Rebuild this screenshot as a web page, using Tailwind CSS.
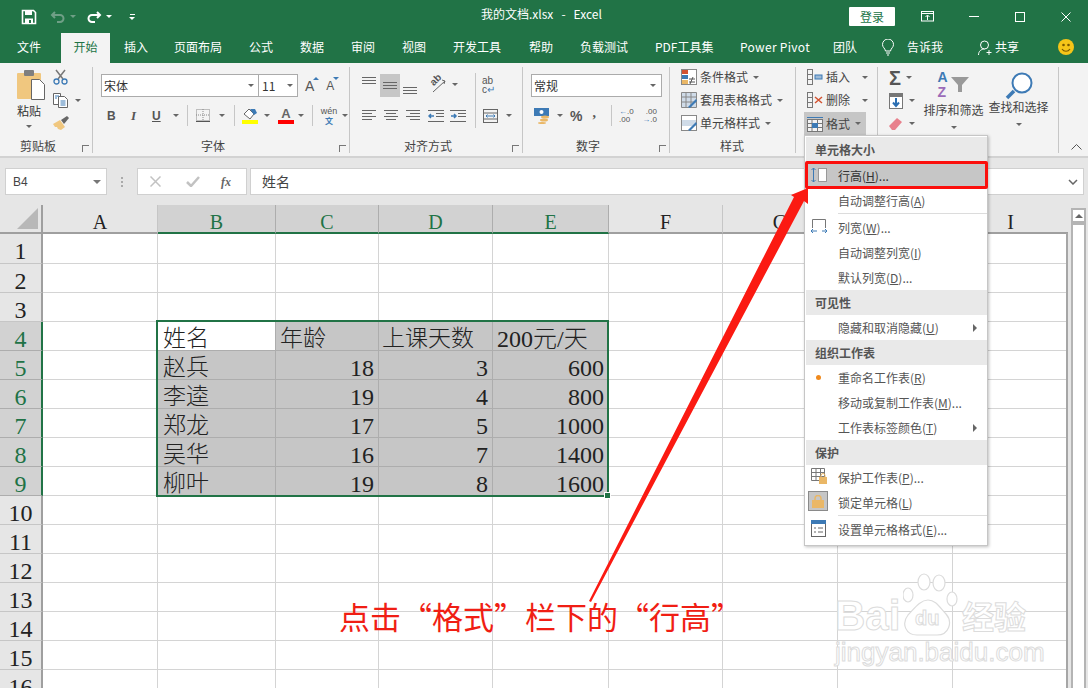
<!DOCTYPE html>
<html lang="zh-CN">
<head>
<meta charset="UTF-8">
<title>我的文档.xlsx - Excel</title>
<script src="https://cdn.jsdelivr.net/npm/@tailwindcss/browser@4"></script>
</head>
<body class="w-[1088px] h-[688px] overflow-hidden relative bg-white font-['Noto_Sans_CJK_SC','Noto_Sans',sans-serif] text-[12px] text-[#444]">

<!-- title bar -->
<div class="h-[33px] bg-[#217346] text-white flex items-center relative">
  <div class="flex items-center w-[150px] pl-[21px] gap-[6px]">
    <svg width="16" height="16" viewBox="0 0 16 16"><path d="M1.5 1.5h11l2 2v11h-13z" fill="none" stroke="#fff" stroke-width="1.6"/><rect x="4" y="2" width="7" height="4" fill="#fff"/><rect x="4" y="9.500" width="8" height="5" fill="#fff"/><rect x="8" y="11" width="2" height="3" fill="#217346"/></svg>
    <svg class="ml-[7px]" width="16" height="14" viewBox="0 0 16 14" fill="none" stroke="#6f9f86" stroke-width="2"><path d="M5 2L2 5l3 3M2 5h8a3.500 3.500 0 0 1 0 7H7"/></svg>
    <span class="w-0 h-0 border-x-[3px] border-x-transparent border-t-[3px] border-t-[#6f9f86] -ml-[2px]"></span>
    <svg class="ml-[4px]" width="16" height="14" viewBox="0 0 16 14" fill="none" stroke="#fff" stroke-width="2"><path d="M11 2l3 3-3 3M14 5H6a3.500 3.500 0 0 0 0 7h3"/></svg>
    <span class="w-0 h-0 border-x-[3px] border-x-transparent border-t-[3px] border-t-white -ml-[2px]"></span>
    <span class="ml-[11px] flex flex-col items-center gap-[2px]"><span class="w-[5px] h-px bg-white"></span><span class="w-0 h-0 border-x-[3px] border-x-transparent border-t-[3px] border-t-white"></span></span>
  </div>
  <div class="absolute left-[481px] top-[5px] text-[12px] leading-[18px] whitespace-pre">我的文档.xlsx   -   Excel</div>
  <div class="ml-auto flex items-center">
    <div class="w-[46px] h-[19px] bg-white text-[#217346] text-[12px] leading-[19px] text-center rounded-[1px] mr-[26px]">登录</div>
    <svg width="13" height="11" viewBox="0 0 13 11" fill="none" stroke="#fff"><rect x=".5" y=".5" width="12" height="9.500"/><path d="M.5 2.500h12M6.500 9V4.500M4.500 6l2-2 2 2"/></svg>
    <span class="w-[10px] h-px bg-white ml-[35px]"></span>
    <span class="w-[10px] h-[10px] border border-white ml-[36px]"></span>
    <svg class="ml-[36px] mr-[17px]" width="10" height="10" viewBox="0 0 10 10" stroke="#fff"><path d="M.5.500l9 9M9.500.500l-9 9"/></svg>
  </div>
</div>

<!-- tabs -->
<div class="h-[30px] bg-[#217346] text-white flex items-stretch text-[12px] leading-[27px] relative">
  <div class="w-[61px] pl-[17px]">文件</div>
  <div class="w-[49px] bg-[#f3f3f3] text-[#217346] text-center">开始</div>
  <div class="w-[64px] pl-[14px]">插入</div>
  <div class="w-[75px] whitespace-nowrap">页面布局</div>
  <div class="w-[51px]">公式</div>
  <div class="w-[51px]">数据</div>
  <div class="w-[51px]">审阅</div>
  <div class="w-[51px]">视图</div>
  <div class="w-[76px] whitespace-nowrap">开发工具</div>
  <div class="w-[51px]">帮助</div>
  <div class="w-[75px] whitespace-nowrap">负载测试</div>
  <div class="w-[85px] whitespace-nowrap">PDF工具集</div>
  <div class="w-[93px] whitespace-nowrap tracking-[.3px]">Power Pivot</div>
  <div class="w-[48px]">团队</div>
  <div class="w-[26px] pt-[6px]"><svg width="14" height="17" viewBox="0 0 14 17" fill="none" stroke="#fff"><path d="M4.500 12C4 9 1.500 8.500 1.500 5.500a5.500 5.500 0 0 1 11 0C12.500 8.500 10 9 9.500 12zM5 14h4M6 16h2"/></svg></div>
  <div class="w-[71px]">告诉我</div>
  <div class="w-[17px] pt-[7px]"><svg width="15" height="16" viewBox="0 0 15 16" fill="none" stroke="#fff"><circle cx="6.500" cy="5" r="4"/><path d="M.5 15c0-4 3-6 6-6M11 10v5M8.500 12.500h5"/></svg></div>
  <div class="w-[63px]">共享</div>
  <div class="pt-[6px]"><svg width="16" height="16" viewBox="0 0 16 16"><circle cx="8" cy="8" r="8" fill="#f5c518"/><circle cx="5.500" cy="6" r="1.300" fill="#7a5a00"/><circle cx="10.500" cy="6" r="1.300" fill="#7a5a00"/><path d="M4 10c2 3 6 3 8 0" fill="none" stroke="#7a5a00" stroke-width="1.200"/></svg></div>
</div>

<!-- ribbon -->
<div class="h-[95px] bg-[#f3f3f3] border-b-2 border-[#d2d2d2] flex relative pt-[4px] text-[#444]">
  <!-- clipboard -->
  <div class="w-[93px] border-r border-[#c6c6c6] h-[86px] relative flex shrink-0">
    <div class="w-[50px] pl-[17px] pt-[3px] flex flex-col items-start">
      <svg width="28" height="30" viewBox="0 0 28 30"><rect x="0" y="3" width="24" height="26" rx="1" fill="#f0c77f"/><rect x="7" y="0" width="10" height="6" rx="1" fill="#7f7f7f"/><path d="M14.500 9.500h8l5 5v15h-13z" fill="#fff" stroke="#666"/></svg>
      <span class="text-[12px] leading-[16px] mt-[3px] text-[#333]">粘贴</span>
      <span class="ml-[9px] mt-[6px] w-0 h-0 border-x-[3px] border-x-transparent border-t-[3px] border-t-[#666]"></span>
    </div>
    <div class="flex flex-col pt-[2px] gap-[8px] pl-[3px]">
      <svg width="15" height="16" viewBox="0 0 15 16" fill="none"><path d="M3 1l7 9M12 1L5 10" stroke="#777" stroke-width="1.500"/><circle cx="3.500" cy="12.500" r="2.500" stroke="#3d7ab5" stroke-width="1.300"/><circle cx="11.500" cy="12.500" r="2.500" stroke="#3d7ab5" stroke-width="1.300"/></svg>
      <div class="flex items-center gap-[6px]"><svg width="16" height="15" viewBox="0 0 16 15" fill="#fff" stroke="#666"><path d="M.5.500h7v11h-7z"/><path d="M5.500 3.500h6l3 3v8h-9z"/><path d="M2 3h4M2 5h2M7.500 8h5M7.500 10h5M7.500 12h5" stroke="#3d7ab5"/></svg><span class="w-0 h-0 border-x-[3px] border-x-transparent border-t-[3px] border-t-[#666]"></span></div>
      <svg width="16" height="15" viewBox="0 0 16 15"><path d="M0 8l7-4 5 7-4 3-3-1-1-2-2 0z" fill="#f0c77f"/><path d="M8 4l6-4 2 2-5 6z" fill="#666"/></svg>
    </div>
    <span class="absolute left-[20px] bottom-[-1px] text-[12px] leading-[16px]">剪贴板</span>
    <span class="absolute right-[3px] bottom-[1px] w-[7px] h-[7px] border-l border-t border-[#777]"></span>
  </div>
  <!-- font -->
  <div class="w-[257px] border-r border-[#c6c6c6] h-[86px] relative shrink-0 pl-[8px] pt-[7px]">
    <div class="flex items-center">
      <div class="w-[158px] h-[23px] bg-white border border-[#ababab] flex items-center justify-between px-[2px] text-[#333] leading-[20px]"><span>宋体</span><span class="mr-[2px] w-0 h-0 border-x-[3px] border-x-transparent border-t-[3px] border-t-[#666]"></span></div>
      <div class="w-[40px] h-[23px] -ml-px bg-white border border-[#ababab] flex items-center justify-between px-[3px] text-[#333]"><span>11</span><span class="mr-[1px] w-0 h-0 border-x-[3px] border-x-transparent border-t-[3px] border-t-[#666]"></span></div>
      <span class="relative ml-[7px] text-[14px] leading-[18px] text-[#555] font-['Liberation_Sans']">A<span class="absolute -right-[5px] top-[0px] w-0 h-0 border-x-[3px] border-x-transparent border-b-[3px] border-b-[#3d7ab5]"></span></span>
      <span class="relative ml-[12px] text-[12px] leading-[18px] text-[#555] font-['Liberation_Sans']">A<span class="absolute -right-[5px] top-[0px] w-0 h-0 border-x-[3px] border-x-transparent border-t-[3px] border-t-[#3d7ab5]"></span></span>
    </div>
    <div class="flex items-center mt-[8px] h-[21px] text-[#555]">
      <b class="ml-[6px] w-[24px] font-['Liberation_Sans'] text-[12px]">B</b>
      <i class="w-[21px] font-['Liberation_Serif'] text-[13px] font-bold">I</i>
      <u class="w-[20px] font-['Liberation_Sans'] font-bold text-[12px]">U</u>
      <span class="w-0 h-0 border-x-[3px] border-x-transparent border-t-[3px] border-t-[#666] ml-[1px]"></span>
      <span class="w-px h-[21px] bg-[#c6c6c6] ml-[8px]"></span>
      <svg class="ml-[8px]" width="14" height="13" viewBox="0 0 14 13" fill="none" stroke="#888" stroke-dasharray="1 1"><rect x=".5" y=".5" width="13" height="11"/><path d="M7 0v12M0 6h14"/><path d="M0 12.500h14" stroke-dasharray="none" stroke="#555"/></svg>
      <span class="w-0 h-0 border-x-[3px] border-x-transparent border-t-[3px] border-t-[#666] ml-[9px]"></span>
      <span class="w-px h-[21px] bg-[#c6c6c6] ml-[9px]"></span>
      <span class="ml-[7px] flex flex-col items-center w-[16px]"><svg width="15" height="12" viewBox="0 0 15 12"><path d="M1 6l5-5 5 5-4 5z" fill="#fff" stroke="#666"/><path d="M7 1h5l2 4-3 2z" fill="#3d7ab5"/></svg><span class="w-[16px] h-[4px] bg-[#ffff00]"></span></span>
      <span class="w-0 h-0 border-x-[3px] border-x-transparent border-t-[3px] border-t-[#666] ml-[6px]"></span>
      <span class="ml-[8px] flex flex-col items-center w-[16px] font-['Liberation_Sans'] font-bold text-[13px] leading-[12px] text-[#666]">A<span class="w-[16px] h-[4px] bg-[#ff0000]"></span></span>
      <span class="w-0 h-0 border-x-[3px] border-x-transparent border-t-[3px] border-t-[#666] ml-[4px]"></span>
      <span class="w-px h-[21px] bg-[#c6c6c6] ml-[8px]"></span>
      <span class="ml-[8px] w-[16px] flex flex-col items-center leading-[9px] text-[8px]"><span class="font-['Liberation_Sans'] text-[9px] text-[#555]">wén</span><span class="text-[#3d7ab5] font-bold">文</span></span>
      <span class="w-0 h-0 border-x-[3px] border-x-transparent border-t-[3px] border-t-[#666] ml-[5px]"></span>
    </div>
    <span class="absolute left-[108px] bottom-[-1px] leading-[16px]">字体</span>
    <span class="absolute right-[3px] bottom-[1px] w-[7px] h-[7px] border-l border-t border-[#777]"></span>
  </div>
  <!-- alignment -->
  <div class="w-[173px] border-r border-[#c6c6c6] h-[86px] relative shrink-0 pl-[12px] pt-[7px]">
    <span class="absolute left-[125px] top-[6px] w-px h-[55px] bg-[#c6c6c6]"></span>
    <div class="flex items-center h-[23px] gap-[7px]">
      <svg class="-mt-[8px]" width="14" height="9" viewBox="0 0 14 9" stroke="#666"><path d="M0 .5h14M0 3.500h14M0 6.500h14"/></svg>
      <span class="w-[20px] h-[23px] -ml-[3px] bg-[#c6c6c6] flex items-center justify-center"><svg width="14" height="9" viewBox="0 0 14 9" stroke="#666"><path d="M0 1.500h14M0 4.500h14M0 7.500h14"/></svg></span>
      <svg width="14" height="9" class="mt-[7px] -ml-[4px]" viewBox="0 0 14 9" stroke="#666"><path d="M0 2.500h14M0 5.500h14M0 8.500h14"/></svg>
      <span class="relative ml-[5px] w-[18px] h-[18px] -mt-[4px]"><span class="absolute left-[1px] top-[0px] -rotate-45 text-[10px] leading-[10px] font-bold font-['Liberation_Sans'] text-[#555]">ab</span><svg class="absolute left-0 top-0" width="18" height="18" viewBox="0 0 18 18" fill="none" stroke="#666"><path d="M4 17L16 6M13 5l3 1-1 3"/></svg></span>
      <span class="w-0 h-0 border-x-[3px] border-x-transparent border-t-[3px] border-t-[#666] -ml-[2px] -mt-[2px]"></span>
      <span class="ml-[17px] text-[10px] leading-[9px] font-['Liberation_Sans'] text-[#555] -mt-[2px]">ab<br>c<span class="text-[#3d7ab5]">↵</span></span>
    </div>
    <div class="flex items-center h-[21px] mt-[8px] gap-[8px]">
      <svg width="14" height="11" viewBox="0 0 14 11" stroke="#666"><path d="M0 .5h14M0 3.500h10M0 6.500h14M0 9.500h10"/></svg>
      <svg width="14" height="11" viewBox="0 0 14 11" stroke="#666"><path d="M0 .5h14M2 3.500h10M0 6.500h14M2 9.500h10"/></svg>
      <svg width="14" height="11" viewBox="0 0 14 11" stroke="#666"><path d="M0 .5h14M4 3.500h10M0 6.500h14M4 9.500h10"/></svg>
      <svg width="16" height="12" viewBox="0 0 16 12" fill="none" stroke="#666"><path d="M0 .5h16M8 3.500h8M8 6.500h8M0 11.500h16"/><path d="M6 6H1M3 4L1 6l2 2" stroke="#3d7ab5" stroke-width="1.500"/></svg>
      <svg width="16" height="12" class="-ml-[2px]" viewBox="0 0 16 12" fill="none" stroke="#666"><path d="M0 .5h16M8 3.500h8M8 6.500h8M0 11.500h16"/><path d="M1 6h5M4 4l2 2-2 2" stroke="#3d7ab5" stroke-width="1.500"/></svg>
      <svg class="ml-[9px]" width="15" height="14" viewBox="0 0 15 14" fill="none" stroke="#666"><rect x=".5" y=".5" width="14" height="13"/><path d="M0 4h15M0 10h15"/><path d="M3 7h9M4.500 5.500L3 7l1.500 1.500M10.500 5.500L12 7l-1.500 1.500" stroke="#3d7ab5"/></svg>
      <span class="w-0 h-0 border-x-[3px] border-x-transparent border-t-[3px] border-t-[#666]"></span>
    </div>
    <span class="absolute left-[54px] bottom-[-1px] leading-[16px]">对齐方式</span>
    <span class="absolute right-[3px] bottom-[1px] w-[7px] h-[7px] border-l border-t border-[#777]"></span>
  </div>
  <!-- number -->
  <div class="w-[147px] border-r border-[#c6c6c6] h-[86px] relative shrink-0 pl-[8px] pt-[7px]">
    <div class="w-[131px] h-[23px] bg-white border border-[#ababab] flex items-center justify-between px-[2px] text-[#333]"><span>常规</span><span class="mr-[3px] w-0 h-0 border-x-[3px] border-x-transparent border-t-[3px] border-t-[#666]"></span></div>
    <div class="flex items-center mt-[8px] h-[21px] pl-[3px]">
      <svg width="17" height="16" viewBox="0 0 17 16"><rect x="0" y="0" width="15" height="8" fill="#3d7ab5"/><circle cx="7.500" cy="4" r="2" fill="#fff"/><ellipse cx="11" cy="9" rx="4" ry="1.500" fill="#eab766"/><ellipse cx="10" cy="12" rx="4" ry="1.500" fill="#eab766"/><ellipse cx="8" cy="15" rx="4" ry="1" fill="#eab766"/></svg>
      <span class="ml-[6px] w-0 h-0 border-x-[3px] border-x-transparent border-t-[3px] border-t-[#666]"></span>
      <span class="ml-[7px] font-['Liberation_Sans'] font-bold text-[14px] text-[#555] leading-none">%</span>
      <span class="ml-[10px] font-['Liberation_Serif'] font-bold text-[14px] text-[#555] leading-none -mt-[5px]">,</span>
      <span class="w-px h-[21px] bg-[#c6c6c6] ml-[15px]"></span>
      <span class="ml-[7px] w-[16px] text-[8px] leading-[8px] font-['Liberation_Sans'] text-[#555]"><span class="text-[#3d7ab5]">←</span>.0<br>.00</span>
      <span class="ml-[6px] w-[16px] text-[8px] leading-[8px] font-['Liberation_Sans'] text-[#555] text-right">.00<br><span class="text-[#3d7ab5]">→</span>.0</span>
    </div>
    <span class="absolute left-[53px] bottom-[-1px] leading-[16px]">数字</span>
    <span class="absolute right-[3px] bottom-[1px] w-[7px] h-[7px] border-l border-t border-[#777]"></span>
  </div>
  <!-- styles -->
  <div class="w-[126px] border-r border-[#c6c6c6] h-[86px] relative shrink-0 pl-[11px] pt-[1px] flex flex-col gap-[5px]">
    <div class="flex items-center h-[18px] gap-[3px]"><svg width="16" height="16" viewBox="0 0 16 16"><rect x=".5" y=".5" width="15" height="15" fill="#fff" stroke="#888"/><rect x="1" y="1" width="6" height="4" fill="#d35230"/><rect x="1" y="6" width="6" height="4" fill="#3d7ab5"/><rect x="1" y="11" width="6" height="4" fill="#eab766"/><path d="M8 10h6M8 13h6M12 8l-3 7" stroke="#555"/></svg><span>条件格式</span><span class="ml-[2px] w-0 h-0 border-x-[3px] border-x-transparent border-t-[3px] border-t-[#666]"></span></div>
    <div class="flex items-center h-[18px] gap-[3px]"><svg width="16" height="16" viewBox="0 0 16 16"><path d="M.5.500h15v15H.5z" fill="#cfdbe8" stroke="#888"/><path d="M0 5h16M0 10h16M5 0v16M10 0v16" stroke="#888"/><path d="M7 15l8-8 1 2-7 7z" fill="#3d7ab5"/></svg><span class="whitespace-nowrap">套用表格格式</span><span class="ml-[2px] w-0 h-0 border-x-[3px] border-x-transparent border-t-[3px] border-t-[#666]"></span></div>
    <div class="flex items-center h-[18px] gap-[3px]"><svg width="16" height="16" viewBox="0 0 16 16"><rect x=".5" y=".5" width="15" height="15" fill="#fff" stroke="#888"/><rect x="1" y="5" width="14" height="6" fill="#cfdbe8"/><path d="M7 15l8-8 1 2-7 7z" fill="#3d7ab5"/></svg><span class="whitespace-nowrap">单元格样式</span><span class="ml-[2px] w-0 h-0 border-x-[3px] border-x-transparent border-t-[3px] border-t-[#666]"></span></div>
    <span class="absolute left-[50px] bottom-[-1px] leading-[16px]">样式</span>
  </div>
  <!-- cells -->
  <div class="w-[82px] border-r border-[#c6c6c6] h-[86px] relative shrink-0 pl-[11px] pt-[1px] flex flex-col gap-[5px]">
    <div class="flex items-center h-[18px] gap-[3px]"><svg width="16" height="16" viewBox="0 0 16 16" fill="none" stroke="#777"><rect x=".5" y=".5" width="5" height="15"/><path d="M0 5.500h6M0 10.500h6"/><rect x="8" y="6" width="7" height="4" fill="#9cb9d6" stroke="#3d7ab5"/></svg><span>插入</span><span class="ml-[9px] w-0 h-0 border-x-[3px] border-x-transparent border-t-[3px] border-t-[#666]"></span></div>
    <div class="flex items-center h-[18px] gap-[3px]"><svg width="16" height="16" viewBox="0 0 16 16" fill="none" stroke="#777"><rect x=".5" y=".5" width="5" height="15"/><path d="M0 5.500h6M0 10.500h6"/><path d="M8 5l7 6M15 5l-7 6" stroke="#d35230" stroke-width="1.500"/></svg><span>删除</span><span class="ml-[9px] w-0 h-0 border-x-[3px] border-x-transparent border-t-[3px] border-t-[#666]"></span></div>
    <div class="flex items-center h-[23px] w-[62px] -ml-[3px] bg-[#c6c6c6] gap-[3px] -mt-[2px] pl-[3px]"><svg width="16" height="16" viewBox="0 0 16 16" fill="none" stroke="#777"><path d="M0 1.500h16" stroke="#3d7ab5"/><rect x=".5" y="3.500" width="15" height="12" fill="#f3f3f3"/><path d="M0 7.500h16M0 11.500h16M5 3v13M10.500 3v13"/><rect x="5" y="7" width="6" height="5" fill="#3d7ab5" stroke="none"/></svg><span>格式</span><span class="ml-[2px] w-0 h-0 border-x-[3px] border-x-transparent border-t-[3px] border-t-[#666]"></span></div>
  </div>
  <!-- editing -->
  <div class="w-[181px] border-r border-[#c6c6c6] h-[86px] relative shrink-0 flex pl-[11px] pt-[2px]">
    <div class="w-[32px] flex flex-col gap-[6px]">
      <div class="flex items-center h-[17px] gap-[5px]"><span class="font-['Liberation_Sans'] font-bold text-[20px] leading-none text-[#555]">Σ</span><span class="w-0 h-0 border-x-[3px] border-x-transparent border-t-[3px] border-t-[#666]"></span></div>
      <div class="flex items-center h-[17px] gap-[6px]"><svg width="14" height="16" viewBox="0 0 14 16" fill="#fff" stroke="#777"><rect x=".5" y=".5" width="13" height="15"/><path d="M0 2.500h14" stroke-width="3" stroke="#777"/><path d="M7 5v8M4 9.500L7 13l3-3.500" stroke="#2b6fb3" stroke-width="2" fill="none"/></svg><span class="w-0 h-0 border-x-[3px] border-x-transparent border-t-[3px] border-t-[#666]"></span></div>
      <div class="flex items-center h-[17px] gap-[6px]"><svg width="14" height="14" viewBox="0 0 14 14"><path d="M0 9l8-8 5 4-7 8H3z" fill="#e8808c"/></svg><span class="w-0 h-0 border-x-[3px] border-x-transparent border-t-[3px] border-t-[#666]"></span></div>
    </div>
    <div class="w-[65px] flex flex-col items-center">
      <div class="h-[28px] relative w-[32px] mt-[3px]"><span class="absolute left-0 -top-[2px] font-['Liberation_Sans'] font-bold text-[14px] leading-[14px] text-[#3d7ab5]">A</span><span class="absolute left-0 top-[13px] font-['Liberation_Sans'] font-bold text-[14px] leading-[14px] text-[#9b6bb8]">Z</span><svg class="absolute left-[13px] top-[5px]" width="18" height="16" viewBox="0 0 18 16"><path d="M0 0h18l-7 8v7H7V8z" fill="#999"/></svg></div>
      <span class="whitespace-nowrap leading-[16px] mt-[2px]">排序和筛选</span>
      <span class="mt-[8px] w-0 h-0 border-x-[3px] border-x-transparent border-t-[3px] border-t-[#666]"></span>
    </div>
    <div class="w-[65px] flex flex-col items-center">
      <svg class="mt-[3px]" width="28" height="28" viewBox="0 0 28 28" fill="none" stroke="#3d7ab5"><circle cx="17" cy="11" r="9.500" stroke-width="2" fill="#fff"/><path d="M9 19l-7 7" stroke-width="3.500"/></svg>
      <span class="whitespace-nowrap leading-[16px] -mt-[1px]">查找和选择</span>
      <span class="mt-[8px] w-0 h-0 border-x-[3px] border-x-transparent border-t-[3px] border-t-[#666]"></span>
    </div>
  </div>
  <svg class="ml-[12px] mt-[77px]" width="11" height="6" viewBox="0 0 11 6" fill="none" stroke="#555"><path d="M.5 5.500l5-5 5 5"/></svg>
</div>

<!-- formula bar -->
<div class="h-[47px] bg-[#e6e6e6] flex pt-[10px] pl-[5px] relative">
  <div class="w-[102px] h-[27px] bg-white border border-[#d0d0d0] flex items-center justify-between pl-[7px] pr-[5px] font-['Liberation_Sans'] text-[#444] text-[12px]">B4<span class="w-0 h-0 border-x-[4px] border-x-transparent border-t-[4px] border-t-[#777]"></span></div>
  <div class="w-[30px] flex justify-center items-center h-[27px]"><span class="flex flex-col gap-[2px]"><span class="w-[2px] h-[2px] bg-[#aaa]"></span><span class="w-[2px] h-[2px] bg-[#aaa]"></span><span class="w-[2px] h-[2px] bg-[#aaa]"></span></span></div>
  <div class="w-[110px] h-[27px] bg-white border border-[#d0d0d0] flex items-center pl-[12px]">
    <svg width="11" height="11" viewBox="0 0 11 11" stroke="#c2c2c2" stroke-width="1.500"><path d="M.5.500l10 10M10.500.500l-10 10"/></svg>
    <svg class="ml-[25px]" width="14" height="11" viewBox="0 0 14 11" fill="none" stroke="#c2c2c2" stroke-width="2.500"><path d="M1 6l4 4 8-9"/></svg>
    <span class="ml-[21px] font-['Liberation_Serif'] italic font-bold text-[12px] text-[#666]">fx</span>
  </div>
  <div class="w-[834px] h-[27px] ml-[3px] bg-white border border-[#d0d0d0] flex items-center pl-[11px] text-[14px] text-[#444] relative">姓名
    <svg class="absolute right-[5px] top-[10px]" width="10" height="6" viewBox="0 0 10 6" fill="none" stroke="#666" stroke-width="1.500"><path d="M1 1l4 4 4-4"/></svg>
  </div>
</div>

<!-- sheet -->
<div class="flex absolute left-0 top-[205px] w-[1088px] h-[483px] overflow-hidden bg-white">
  <div class="w-[1068px] grid grid-cols-[43px_115px_118px_103px_114px_116px_114px_115px_115px_115px] grid-rows-[29px_30px_repeat(15,29px)] shrink-0 font-['Liberation_Serif','Noto_Sans_CJK_SC',serif] text-[24px] text-[#222] leading-[34px]">
    <!-- header row -->
    <div class="bg-[#e6e6e6] border-r-2 border-b-2 border-[#9f9f9f] relative"><span class="absolute right-[3px] bottom-[3px] w-0 h-0 border-l-[21px] border-l-transparent border-b-[21px] border-b-[#b8b8b8]"></span></div>
    <div class="bg-[#e6e6e6] border-r border-b-2 border-r-[#c6c6c6] border-b-[#9f9f9f] text-center text-[20px]">A</div>
    <div class="bg-[#d2d2d2] border-r border-b-2 border-r-[#adadad] border-b-[#217346] text-center text-[20px] text-[#217346]">B</div>
    <div class="bg-[#d2d2d2] border-r border-b-2 border-r-[#adadad] border-b-[#217346] text-center text-[20px] text-[#217346]">C</div>
    <div class="bg-[#d2d2d2] border-r border-b-2 border-r-[#adadad] border-b-[#217346] text-center text-[20px] text-[#217346]">D</div>
    <div class="bg-[#d2d2d2] border-r border-b-2 border-r-[#adadad] border-b-[#217346] text-center text-[20px] text-[#217346]">E</div>
    <div class="bg-[#e6e6e6] border-r border-b-2 border-r-[#c6c6c6] border-b-[#9f9f9f] text-center text-[20px]">F</div>
    <div class="bg-[#e6e6e6] border-r border-b-2 border-r-[#c6c6c6] border-b-[#9f9f9f] text-center text-[20px]">G</div>
    <div class="bg-[#e6e6e6] border-r border-b-2 border-r-[#c6c6c6] border-b-[#9f9f9f] text-center text-[20px]">H</div>
    <div class="bg-[#e6e6e6] border-b-2 border-b-[#9f9f9f] text-center text-[20px]">I</div>

    <!-- row 1 -->
    <div class="bg-[#e6e6e6] border-r-2 border-b border-r-[#9f9f9f] border-b-[#c6c6c6] text-center">1</div>
    <div class="border-r border-b border-[#d4d4d4]"></div><div class="border-r border-b border-[#d4d4d4]"></div><div class="border-r border-b border-[#d4d4d4]"></div><div class="border-r border-b border-[#d4d4d4]"></div><div class="border-r border-b border-[#d4d4d4]"></div><div class="border-r border-b border-[#d4d4d4]"></div><div class="border-r border-b border-[#d4d4d4]"></div><div class="border-r border-b border-[#d4d4d4]"></div><div class="border-b border-[#d4d4d4]"></div>
    <!-- row 2 -->
    <div class="bg-[#e6e6e6] border-r-2 border-b border-r-[#9f9f9f] border-b-[#c6c6c6] text-center">2</div>
    <div class="border-r border-b border-[#d4d4d4]"></div><div class="border-r border-b border-[#d4d4d4]"></div><div class="border-r border-b border-[#d4d4d4]"></div><div class="border-r border-b border-[#d4d4d4]"></div><div class="border-r border-b border-[#d4d4d4]"></div><div class="border-r border-b border-[#d4d4d4]"></div><div class="border-r border-b border-[#d4d4d4]"></div><div class="border-r border-b border-[#d4d4d4]"></div><div class="border-b border-[#d4d4d4]"></div>
    <!-- row 3 -->
    <div class="bg-[#e6e6e6] border-r-2 border-b border-r-[#9f9f9f] border-b-[#c6c6c6] text-center">3</div>
    <div class="border-r border-b border-[#d4d4d4]"></div><div class="border-r border-b border-[#d4d4d4]"></div><div class="border-r border-b border-[#d4d4d4]"></div><div class="border-r border-b border-[#d4d4d4]"></div><div class="border-r border-b border-[#d4d4d4]"></div><div class="border-r border-b border-[#d4d4d4]"></div><div class="border-r border-b border-[#d4d4d4]"></div><div class="border-r border-b border-[#d4d4d4]"></div><div class="border-b border-[#d4d4d4]"></div>
    <!-- row 4 -->
    <div class="bg-[#d2d2d2] border-r-2 border-b border-r-[#217346] border-b-[#adadad] text-center text-[#217346]">4</div>
    <div class="border-r border-b border-[#d4d4d4]"></div>
    <div class="border-b border-r border-[#adadad] bg-white pl-[5px] text-[23px] font-light">姓名</div>
    <div class="border-b border-r border-[#adadad] bg-[#c6c6c6] pl-[4px] text-[23px] font-light">年龄</div>
    <div class="border-b border-r border-[#adadad] bg-[#c6c6c6] pl-[3px] text-[23px] font-light whitespace-nowrap">上课天数</div>
    <div class="border-b border-r border-[#adadad] bg-[#c6c6c6] pl-[4px] text-[24px] font-light whitespace-nowrap">200元/天</div>
    <div class="border-r border-b border-[#d4d4d4]"></div><div class="border-r border-b border-[#d4d4d4]"></div><div class="border-r border-b border-[#d4d4d4]"></div><div class="border-b border-[#d4d4d4]"></div>
    <!-- row 5 -->
    <div class="bg-[#d2d2d2] border-r-2 border-b border-r-[#217346] border-b-[#adadad] text-center text-[#217346]">5</div>
    <div class="border-r border-b border-[#d4d4d4]"></div>
    <div class="border-b border-r border-[#adadad] bg-[#c6c6c6] pl-[5px] text-[23px] font-light">赵兵</div>
    <div class="border-b border-r border-[#adadad] bg-[#c6c6c6] text-right pr-[4px]">18</div>
    <div class="border-b border-r border-[#adadad] bg-[#c6c6c6] text-right pr-[4px]">3</div>
    <div class="border-b border-r border-[#adadad] bg-[#c6c6c6] text-right pr-[4px]">600</div>
    <div class="border-r border-b border-[#d4d4d4]"></div><div class="border-r border-b border-[#d4d4d4]"></div><div class="border-r border-b border-[#d4d4d4]"></div><div class="border-b border-[#d4d4d4]"></div>
    <!-- row 6 -->
    <div class="bg-[#d2d2d2] border-r-2 border-b border-r-[#217346] border-b-[#adadad] text-center text-[#217346]">6</div>
    <div class="border-r border-b border-[#d4d4d4]"></div>
    <div class="border-b border-r border-[#adadad] bg-[#c6c6c6] pl-[5px] text-[23px] font-light">李逵</div>
    <div class="border-b border-r border-[#adadad] bg-[#c6c6c6] text-right pr-[4px]">19</div>
    <div class="border-b border-r border-[#adadad] bg-[#c6c6c6] text-right pr-[4px]">4</div>
    <div class="border-b border-r border-[#adadad] bg-[#c6c6c6] text-right pr-[4px]">800</div>
    <div class="border-r border-b border-[#d4d4d4]"></div><div class="border-r border-b border-[#d4d4d4]"></div><div class="border-r border-b border-[#d4d4d4]"></div><div class="border-b border-[#d4d4d4]"></div>
    <!-- row 7 -->
    <div class="bg-[#d2d2d2] border-r-2 border-b border-r-[#217346] border-b-[#adadad] text-center text-[#217346]">7</div>
    <div class="border-r border-b border-[#d4d4d4]"></div>
    <div class="border-b border-r border-[#adadad] bg-[#c6c6c6] pl-[5px] text-[23px] font-light">郑龙</div>
    <div class="border-b border-r border-[#adadad] bg-[#c6c6c6] text-right pr-[4px]">17</div>
    <div class="border-b border-r border-[#adadad] bg-[#c6c6c6] text-right pr-[4px]">5</div>
    <div class="border-b border-r border-[#adadad] bg-[#c6c6c6] text-right pr-[4px]">1000</div>
    <div class="border-r border-b border-[#d4d4d4]"></div><div class="border-r border-b border-[#d4d4d4]"></div><div class="border-r border-b border-[#d4d4d4]"></div><div class="border-b border-[#d4d4d4]"></div>
    <!-- row 8 -->
    <div class="bg-[#d2d2d2] border-r-2 border-b border-r-[#217346] border-b-[#adadad] text-center text-[#217346]">8</div>
    <div class="border-r border-b border-[#d4d4d4]"></div>
    <div class="border-b border-r border-[#adadad] bg-[#c6c6c6] pl-[5px] text-[23px] font-light">吴华</div>
    <div class="border-b border-r border-[#adadad] bg-[#c6c6c6] text-right pr-[4px]">16</div>
    <div class="border-b border-r border-[#adadad] bg-[#c6c6c6] text-right pr-[4px]">7</div>
    <div class="border-b border-r border-[#adadad] bg-[#c6c6c6] text-right pr-[4px]">1400</div>
    <div class="border-r border-b border-[#d4d4d4]"></div><div class="border-r border-b border-[#d4d4d4]"></div><div class="border-r border-b border-[#d4d4d4]"></div><div class="border-b border-[#d4d4d4]"></div>
    <!-- row 9 -->
    <div class="bg-[#d2d2d2] border-r-2 border-b border-r-[#217346] border-b-[#adadad] text-center text-[#217346]">9</div>
    <div class="border-r border-b border-[#d4d4d4]"></div>
    <div class="border-b border-r border-[#adadad] bg-[#c6c6c6] pl-[5px] text-[23px] font-light">柳叶</div>
    <div class="border-b border-r border-[#adadad] bg-[#c6c6c6] text-right pr-[4px]">19</div>
    <div class="border-b border-r border-[#adadad] bg-[#c6c6c6] text-right pr-[4px]">8</div>
    <div class="border-b border-r border-[#adadad] bg-[#c6c6c6] text-right pr-[4px]">1600</div>
    <div class="border-r border-b border-[#d4d4d4]"></div><div class="border-r border-b border-[#d4d4d4]"></div><div class="border-r border-b border-[#d4d4d4]"></div><div class="border-b border-[#d4d4d4]"></div>
    <!-- row 10 -->
    <div class="bg-[#e6e6e6] border-r-2 border-b border-r-[#9f9f9f] border-b-[#c6c6c6] text-center">10</div>
    <div class="border-r border-b border-[#d4d4d4]"></div><div class="border-r border-b border-[#d4d4d4]"></div><div class="border-r border-b border-[#d4d4d4]"></div><div class="border-r border-b border-[#d4d4d4]"></div><div class="border-r border-b border-[#d4d4d4]"></div><div class="border-r border-b border-[#d4d4d4]"></div><div class="border-r border-b border-[#d4d4d4]"></div><div class="border-r border-b border-[#d4d4d4]"></div><div class="border-b border-[#d4d4d4]"></div>
    <!-- row 11 -->
    <div class="bg-[#e6e6e6] border-r-2 border-b border-r-[#9f9f9f] border-b-[#c6c6c6] text-center">11</div>
    <div class="border-r border-b border-[#d4d4d4]"></div><div class="border-r border-b border-[#d4d4d4]"></div><div class="border-r border-b border-[#d4d4d4]"></div><div class="border-r border-b border-[#d4d4d4]"></div><div class="border-r border-b border-[#d4d4d4]"></div><div class="border-r border-b border-[#d4d4d4]"></div><div class="border-r border-b border-[#d4d4d4]"></div><div class="border-r border-b border-[#d4d4d4]"></div><div class="border-b border-[#d4d4d4]"></div>
    <!-- row 12 -->
    <div class="bg-[#e6e6e6] border-r-2 border-b border-r-[#9f9f9f] border-b-[#c6c6c6] text-center">12</div>
    <div class="border-r border-b border-[#d4d4d4]"></div><div class="border-r border-b border-[#d4d4d4]"></div><div class="border-r border-b border-[#d4d4d4]"></div><div class="border-r border-b border-[#d4d4d4]"></div><div class="border-r border-b border-[#d4d4d4]"></div><div class="border-r border-b border-[#d4d4d4]"></div><div class="border-r border-b border-[#d4d4d4]"></div><div class="border-r border-b border-[#d4d4d4]"></div><div class="border-b border-[#d4d4d4]"></div>
    <!-- row 13 -->
    <div class="bg-[#e6e6e6] border-r-2 border-b border-r-[#9f9f9f] border-b-[#c6c6c6] text-center">13</div>
    <div class="border-r border-b border-[#d4d4d4]"></div><div class="border-r border-b border-[#d4d4d4]"></div><div class="border-r border-b border-[#d4d4d4]"></div><div class="border-r border-b border-[#d4d4d4]"></div><div class="border-r border-b border-[#d4d4d4]"></div><div class="border-r border-b border-[#d4d4d4]"></div><div class="border-r border-b border-[#d4d4d4]"></div><div class="border-r border-b border-[#d4d4d4]"></div><div class="border-b border-[#d4d4d4]"></div>
    <!-- row 14 -->
    <div class="bg-[#e6e6e6] border-r-2 border-b border-r-[#9f9f9f] border-b-[#c6c6c6] text-center">14</div>
    <div class="border-r border-b border-[#d4d4d4]"></div><div class="border-r border-b border-[#d4d4d4]"></div><div class="border-r border-b border-[#d4d4d4]"></div><div class="border-r border-b border-[#d4d4d4]"></div><div class="border-r border-b border-[#d4d4d4]"></div><div class="border-r border-b border-[#d4d4d4]"></div><div class="border-r border-b border-[#d4d4d4]"></div><div class="border-r border-b border-[#d4d4d4]"></div><div class="border-b border-[#d4d4d4]"></div>
    <!-- row 15 -->
    <div class="bg-[#e6e6e6] border-r-2 border-b border-r-[#9f9f9f] border-b-[#c6c6c6] text-center">15</div>
    <div class="border-r border-b border-[#d4d4d4]"></div><div class="border-r border-b border-[#d4d4d4]"></div><div class="border-r border-b border-[#d4d4d4]"></div><div class="border-r border-b border-[#d4d4d4]"></div><div class="border-r border-b border-[#d4d4d4]"></div><div class="border-r border-b border-[#d4d4d4]"></div><div class="border-r border-b border-[#d4d4d4]"></div><div class="border-r border-b border-[#d4d4d4]"></div><div class="border-b border-[#d4d4d4]"></div>
    <!-- row 16 -->
    <div class="bg-[#e6e6e6] border-r-2 border-b border-r-[#9f9f9f] border-b-[#c6c6c6] text-center">16</div>
    <div class="border-r border-b border-[#d4d4d4]"></div><div class="border-r border-b border-[#d4d4d4]"></div><div class="border-r border-b border-[#d4d4d4]"></div><div class="border-r border-b border-[#d4d4d4]"></div><div class="border-r border-b border-[#d4d4d4]"></div><div class="border-r border-b border-[#d4d4d4]"></div><div class="border-r border-b border-[#d4d4d4]"></div><div class="border-r border-b border-[#d4d4d4]"></div><div class="border-b border-[#d4d4d4]"></div>
  </div>
  <!-- scrollbar -->
  <div class="w-[20px] bg-[#e6e6e6] relative">
    <span class="absolute left-[-2px] top-[28px] bottom-0 w-[2px] bg-[#a6a6a6]"></span>
    <div class="absolute left-[3px] top-[3px] w-[15px] h-[15px] bg-white border-2 border-[#b4b4b4] flex items-center justify-center"><span class="w-0 h-0 border-x-[4px] border-x-transparent border-b-[4px] border-b-[#666]"></span></div>
    <div class="absolute left-[3px] top-[18px] w-[15px] h-[470px] bg-white border-2 border-[#b4b4b4]"></div>
  </div>
</div>

<!-- selection border -->
<div class="absolute left-[156px] top-[320px] w-[453px] h-[177px] border-2 border-[#217346] pointer-events-none"></div>
<div class="absolute left-[605px] top-[493px] w-[5px] h-[5px] bg-[#217346] outline outline-white"></div>

<!-- format dropdown -->
<div class="absolute left-[804px] top-[135px] w-[184px] h-[411px] bg-white border border-[#c6c6c6] shadow-[1px_1px_3px_rgba(0,0,0,.25)] pl-px text-[12px] text-[#555] flex flex-col">
  <div class="h-[26px] bg-[#e9e9e9] pl-[9px] leading-[25px] font-bold text-[#555] shrink-0 mt-px">单元格大小</div>
  <div class="h-[25px] bg-[#c6c6c6] flex items-center relative shrink-0 text-[#333]">
    <svg class="absolute left-[4px] top-[3px]" width="18" height="18" viewBox="0 0 18 18"><path d="M3.500 2v14M1.500 4l2-2 2 2M1.500 14l2 2 2-2" fill="none" stroke="#3d7ab5"/><rect x="8.500" y="2.500" width="8" height="13" fill="#fff" stroke="#999"/></svg>
    <span class="ml-[32px]">行高(<u>H</u>)...</span>
  </div>
  <div class="h-[25px] flex items-center pl-[32px] shrink-0">自动调整行高(<u>A</u>)</div>
  <div class="ml-[32px] h-px mb-px bg-[#dcdcdc] shrink-0"></div>
  <div class="h-[25px] flex items-center relative shrink-0">
    <svg class="absolute left-[4px] top-[3px]" width="18" height="17" viewBox="0 0 18 17" fill="none"><path d="M2.500 10V1.500h13V10" stroke="#777"/><path d="M1 13h6M12 13h5M3 11l-2 2 2 2M15 11l2 2-2 2" stroke="#3d7ab5"/></svg>
    <span class="ml-[32px]">列宽(<u>W</u>)...</span>
  </div>
  <div class="h-[25px] flex items-center pl-[32px] shrink-0">自动调整列宽(<u>I</u>)</div>
  <div class="h-[25px] flex items-center pl-[32px] shrink-0">默认列宽(<u>D</u>)...</div>
  <div class="h-[25px] bg-[#e9e9e9] pl-[9px] leading-[25px] font-bold shrink-0">可见性</div>
  <div class="h-[25px] flex items-center pl-[32px] relative shrink-0">隐藏和取消隐藏(<u>U</u>)<span class="absolute right-[10px] top-[9px] w-0 h-0 border-y-[4px] border-y-transparent border-l-[4px] border-l-[#666]"></span></div>
  <div class="h-[25px] bg-[#e9e9e9] pl-[9px] leading-[25px] font-bold shrink-0">组织工作表</div>
  <div class="h-[25px] flex items-center pl-[32px] relative shrink-0"><span class="absolute left-[10px] top-[10px] w-[5px] h-[5px] rounded-full bg-[#f08a1d]"></span>重命名工作表(<u>R</u>)</div>
  <div class="h-[25px] flex items-center pl-[32px] shrink-0 whitespace-nowrap">移动或复制工作表(<u>M</u>)...</div>
  <div class="h-[25px] flex items-center pl-[32px] relative shrink-0">工作表标签颜色(<u>T</u>)<span class="absolute right-[10px] top-[9px] w-0 h-0 border-y-[4px] border-y-transparent border-l-[4px] border-l-[#666]"></span></div>
  <div class="h-[25px] bg-[#e9e9e9] pl-[9px] leading-[25px] font-bold shrink-0">保护</div>
  <div class="h-[25px] flex items-center relative shrink-0">
    <svg class="absolute left-[5px] top-[3px]" width="17" height="17" viewBox="0 0 17 17" fill="none" stroke="#777"><path d="M.5.500h13v12H.5zM.5 4.500h13M.5 8.500h13M5 .5v12M9.500.5v12"/><rect x="8" y="9" width="8" height="7" fill="#eab766" stroke="none"/><path d="M10 9V7.500a2 2 0 0 1 4 0V9" stroke="#eab766"/></svg>
    <span class="ml-[32px]">保护工作表(<u>P</u>)...</span>
  </div>
  <div class="h-[25px] flex items-center relative shrink-0">
    <span class="absolute left-[2px] top-[1px] w-[20px] h-[20px] bg-[#c6c6c6] border border-[#8a8a8a] flex items-center justify-center"><svg width="12" height="13" viewBox="0 0 12 13" fill="none"><rect x="0" y="5" width="12" height="8" fill="#eab766"/><path d="M3 5V3.500a3 3 0 0 1 6 0V5" stroke="#eab766" stroke-width="1.500"/></svg></span>
    <span class="ml-[32px]">锁定单元格(<u>L</u>)</span>
  </div>
  <div class="ml-[32px] h-px bg-[#dcdcdc] shrink-0"></div>
  <div class="h-[27px] flex items-center relative shrink-0">
    <svg class="absolute left-[5px] top-[4px]" width="15" height="17" viewBox="0 0 15 17" fill="none" stroke="#666"><rect x=".5" y=".5" width="14" height="16" fill="#fff"/><rect x="0" y="0" width="15" height="4" fill="#3d7ab5" stroke="none"/><path d="M3 8h2M7 8h5M3 12h2M7 12h5"/></svg>
    <span class="ml-[32px] whitespace-nowrap">设置单元格格式(<u>E</u>)...</span>
  </div>
</div>

<!-- red highlight box over 行高 -->
<div class="absolute left-[805px] top-[161px] w-[183px] h-[28px] border-[3px] border-[#fb0f0c] rounded-[2px]"></div>

<!-- annotation arrow -->
<svg class="absolute left-[580px] top-[180px]" width="240" height="430" viewBox="0 0 240 430"><path d="M228 8L228 24 224 21 11 422 9 421 214 17 211 15z" fill="#fb1a12"/></svg>
<div class="absolute left-[339px] top-[595px] text-[31px] leading-[42px] text-[#f01e14] whitespace-nowrap">点击“格式”栏下的“行高”</div>

<!-- baidu watermark -->
<div class="absolute left-[835px] top-[572px] w-[200px] h-[100px] text-white">
  <svg class="absolute left-[68px] top-0" width="60" height="66" viewBox="0 0 60 66" fill="white" stroke="#dcdcdc" stroke-width="1.200"><ellipse cx="5" cy="23" rx="5" ry="7"/><ellipse cx="21" cy="10" rx="6" ry="8"/><ellipse cx="36" cy="11" rx="6" ry="8"/><ellipse cx="49" cy="27" rx="5" ry="7"/><path d="M25 28c8 0 12 8 18 14 7 8 3 21-9 21H14C3 63 -2 52 5 43c6-6 12-15 20-15z"/></svg>
  <span class="absolute left-0 top-[22px] font-['Liberation_Sans'] font-bold text-[42px] leading-[44px] text-white [-webkit-text-stroke:1px_#dcdcdc]">Bai</span>
  <span class="absolute left-[80px] top-[34px] font-['Liberation_Sans'] font-bold text-[20px] leading-[24px] text-white [-webkit-text-stroke:1px_#dcdcdc]">du</span>
  <span class="absolute left-[127px] top-[20px] font-bold text-[32px] leading-[46px] whitespace-nowrap text-white [-webkit-text-stroke:1px_#dcdcdc]">经验</span>
  <span class="absolute left-0 top-[64px] font-['Liberation_Sans'] text-[26px] leading-[32px] whitespace-nowrap text-white [-webkit-text-stroke:1px_#dcdcdc]">jingyan.baidu.com</span>
</div>

</body>
</html>
